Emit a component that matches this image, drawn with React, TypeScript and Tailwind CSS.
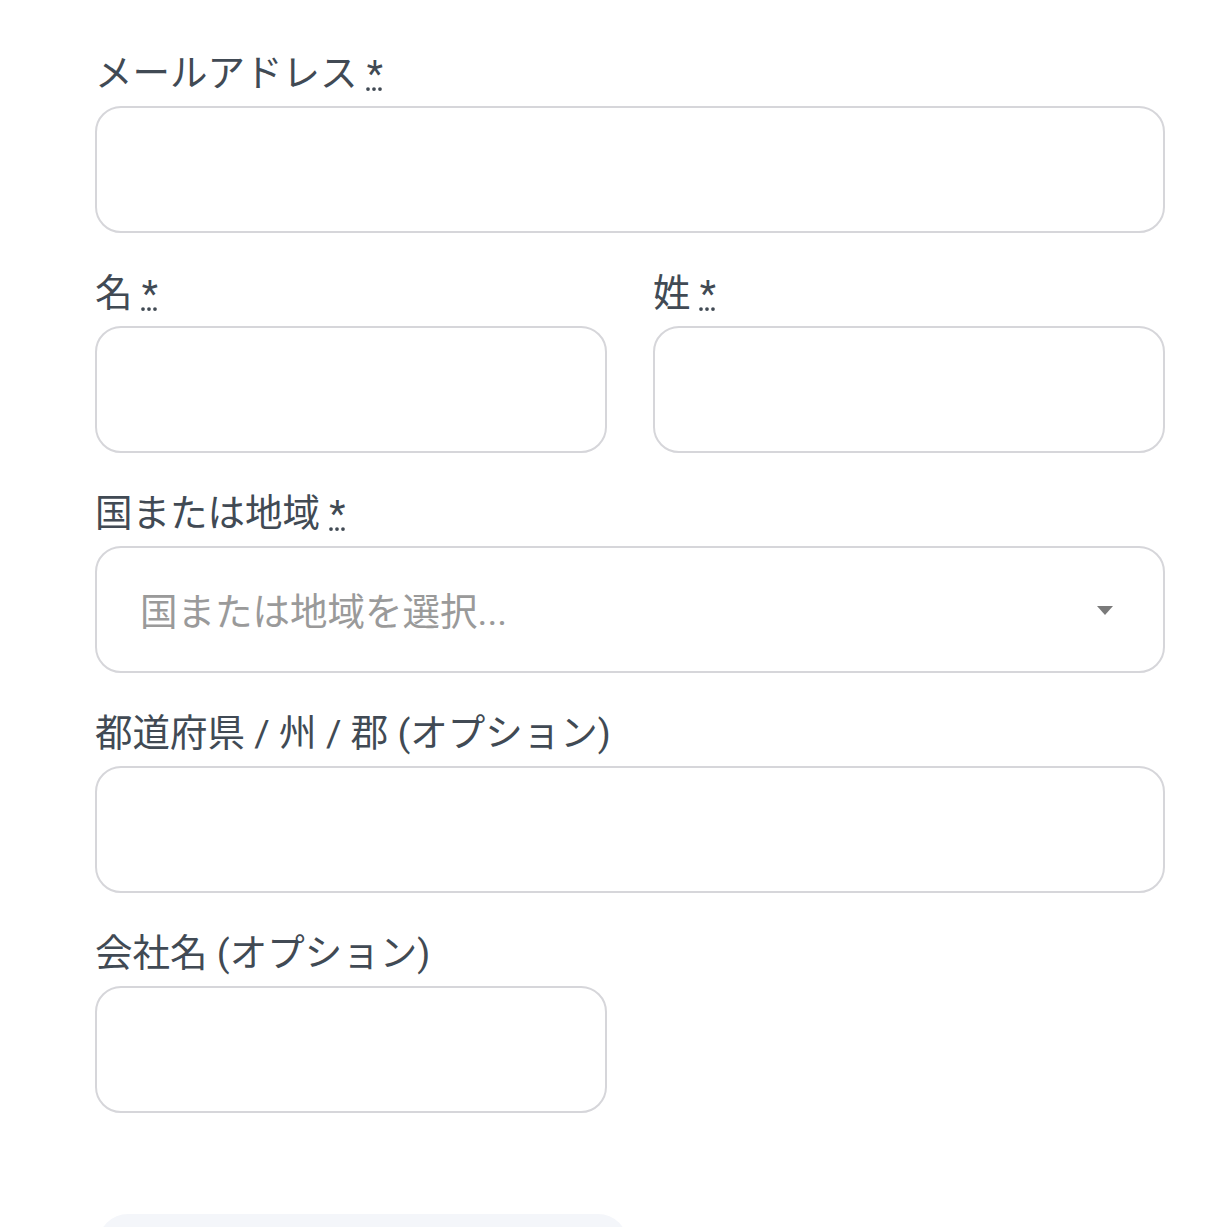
// Imports
import React from "react";

// Field label with optional required mark
function FieldLabel({ text, required }: { text: string; required?: boolean }) {
    return (
        <label className="block h-[42px] mb-[12px] leading-[42px] text-[37.5px] text-[#414a54]">
            {text}
            {required && (
                <>
                    {" "}
                    <abbr title="必須" className="underline decoration-dotted">*</abbr>
                </>
            )}
        </label>
    );
}

// Plain text box
function TextBox() {
    return (
        <input
            type="text"
            className="block w-full h-[127px] rounded-[26px] border-2 border-[#d6d6da] bg-white px-[43px] text-[37.5px] outline-none"
        />
    );
}

export default function App() {
    return (
        <main
            className="min-h-screen bg-white"
            style={{ fontFamily: 'Roboto, "Noto Sans CJK JP", sans-serif' }}
        >
            <form className="w-[1070px] ml-[95px] pt-[52px] flex flex-col gap-y-[39px]">
                {/* Email */}
                <div>
                    <FieldLabel text="メールアドレス" required />
                    <TextBox />
                </div>

                {/* Name */}
                <div className="grid grid-cols-2 gap-x-[46px]">
                    <div>
                        <FieldLabel text="名" required />
                        <TextBox />
                    </div>
                    <div>
                        <FieldLabel text="姓" required />
                        <TextBox />
                    </div>
                </div>

                {/* Country */}
                <div>
                    <FieldLabel text="国または地域" required />
                    <div className="h-[127px] rounded-[26px] border-2 border-[#d6d6da] bg-white flex items-center pl-[43px] pr-[50px]">
                        <span className="flex-1 text-[37.5px] text-[#9a9a9a] pt-[6px]">国または地域を選択...</span>
                        <svg width="16" height="10" viewBox="0 0 16 10" className="mt-[2px]">
                            <path d="M0 0 L16 0 L8 9 Z" fill="#7a7a7a" />
                        </svg>
                    </div>
                </div>

                {/* State */}
                <div>
                    <FieldLabel text="都道府県 / 州 / 郡 (オプション)" />
                    <TextBox />
                </div>

                {/* Company */}
                <div className="grid grid-cols-2 gap-x-[46px]">
                    <div>
                        <FieldLabel text="会社名 (オプション)" />
                        <TextBox />
                    </div>
                </div>

                {/* Submit (cut off) */}
                <div className="mt-[62px] w-[530px] ml-[3px] h-[110px] rounded-[30px] bg-[#f4f6fa]" />
            </form>
        </main>
    );
}
